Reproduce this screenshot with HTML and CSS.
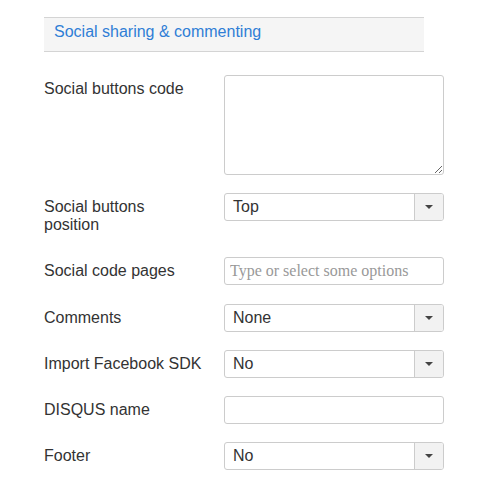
FILE: index.html
```html
<!DOCTYPE html>
<html>
<head>
<meta charset="utf-8">
<link rel="stylesheet" href="styles.css">
</head>
<body>
<div class="page">
  <div class="section-head">Social sharing &amp; commenting</div>
  <div class="form">
    <div class="row">
      <label class="label">Social buttons code</label>
      <div class="control"><textarea class="textarea"></textarea></div>
    </div>
    <div class="row">
      <label class="label">Social buttons position</label>
      <div class="control"><div class="select"><span class="value">Top</span><span class="arrow"></span></div></div>
    </div>
    <div class="row row-multi">
      <label class="label">Social code pages</label>
      <div class="control"><input class="input multi" type="text" placeholder="Type or select some options"></div>
    </div>
    <div class="row">
      <label class="label">Comments</label>
      <div class="control"><div class="select"><span class="value">None</span><span class="arrow"></span></div></div>
    </div>
    <div class="row">
      <label class="label">Import Facebook SDK</label>
      <div class="control"><div class="select"><span class="value">No</span><span class="arrow"></span></div></div>
    </div>
    <div class="row">
      <label class="label">DISQUS name</label>
      <div class="control"><input class="input" type="text"></div>
    </div>
    <div class="row">
      <label class="label">Footer</label>
      <div class="control"><div class="select"><span class="value">No</span><span class="arrow"></span></div></div>
    </div>
  </div>
</div>
</body>
</html>
```
FILE: styles.css
```css
html, body {
  margin: 0;
  padding: 0;
  background: #fff;
}
body {
  font-family: "Liberation Sans", Arial, sans-serif;
  font-size: 16px;
  color: #333;
}
.page {
  padding: 17px 0 0 44px;
}
.section-head {
  width: 360px;
  background: #f5f5f5;
  border-top: 1px solid #d4d4d4;
  border-bottom: 1px solid #d4d4d4;
  color: #2f7ed6;
  line-height: 18px;
  padding: 5px 10px 10px 10px;
}
.form {
  padding-top: 23px;
}
.row {
  display: flex;
  align-items: flex-start;
  margin-bottom: 18px;
}
.row-multi {
  margin-bottom: 19px;
}
.label {
  width: 160px;
  margin-right: 20px;
  padding: 5px 0;
  line-height: 18px;
}
.control {
  width: 220px;
}
.textarea {
  display: block;
  box-sizing: border-box;
  width: 220px;
  height: 100px;
  margin: 0;
  border: 1px solid #ccc;
  border-radius: 3px;
  padding: 4px 6px;
  font-family: "Liberation Sans", Arial, sans-serif;
  font-size: 16px;
}
.input {
  display: block;
  box-sizing: border-box;
  width: 220px;
  height: 28px;
  margin: 0;
  border: 1px solid #ccc;
  border-radius: 3px;
  padding: 0 6px;
  font-family: "Liberation Sans", Arial, sans-serif;
  font-size: 16px;
  color: #333;
  outline: none;
}
.input.multi {
  padding-left: 5px;
  font-family: "Liberation Serif", "Times New Roman", serif;
}
.input.multi::placeholder {
  color: #999;
  font-family: "Liberation Serif", "Times New Roman", serif;
}
.select {
  box-sizing: border-box;
  height: 28px;
  display: flex;
  border: 1px solid #ccc;
  border-radius: 3px;
  overflow: hidden;
  background: #fff;
}
.value {
  flex: 1;
  padding-left: 8px;
  line-height: 26px;
  color: #333;
}
.arrow {
  width: 28px;
  border-left: 1px solid #ccc;
  background: #f2f2f2;
  display: flex;
  align-items: center;
  justify-content: center;
}
.arrow::after {
  content: "";
  width: 0;
  height: 0;
  border-left: 4px solid transparent;
  border-right: 4px solid transparent;
  border-top: 4px solid #444;
}
```
